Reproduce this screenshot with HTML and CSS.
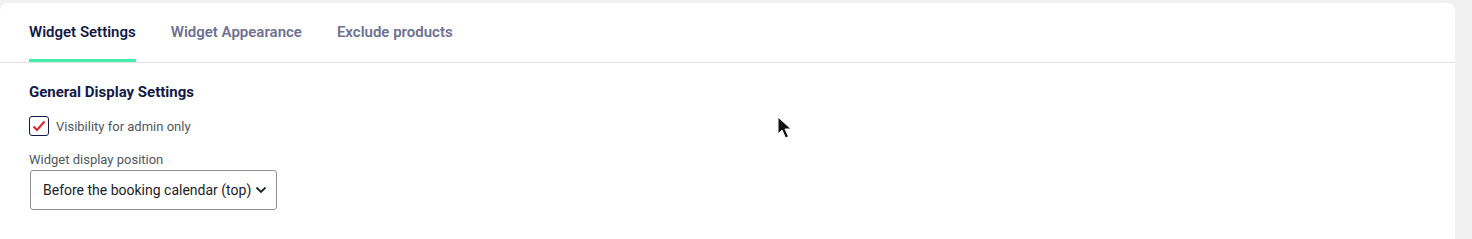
FILE: index.html
```html
<!DOCTYPE html>
<html lang="en">
<head>
    <meta charset="UTF-8">
    <title>Widget Settings</title>
    <link rel="stylesheet" href="styles.css">
</head>
<body>
    <div class="settings-card">
        <nav class="tabs">
            <a class="tab active" href="#">Widget Settings</a>
            <a class="tab" href="#">Widget Appearance</a>
            <a class="tab" href="#">Exclude products</a>
        </nav>

        <div class="tab-content">
            <h2 class="section-title">General Display Settings</h2>

            <label class="check-row">
                <span class="check-box">
                    <svg width="14" height="12" viewBox="0 0 14 12"><path d="M1.5 6.5 L5 10 L12.5 1.5" fill="none" stroke="#e0202f" stroke-width="2"/></svg>
                </span>
                Visibility for admin only
            </label>

            <div class="field">
                <div class="field-label">Widget display position</div>
                <div class="select-box">
                    <span>Before the booking calendar (top)</span>
                    <svg width="12" height="8" viewBox="0 0 12 8"><path d="M1.5 1.5 L6 6 L10.5 1.5" fill="none" stroke="#1d2327" stroke-width="1.8"/></svg>
                </div>
            </div>
        </div>

        <svg class="cursor" width="18" height="26" viewBox="0 0 18 26"><path d="M1 1 L1 18 L5 14 L8.5 22 L11.5 20.5 L8 13 L14 13 Z" fill="#111" stroke="#fff" stroke-width="1"/></svg>
    </div>
</body>
</html>
```

FILE: styles.css
```css
* {
    margin: 0;
    padding: 0;
    box-sizing: border-box;
    font-family: Roboto, 'Liberation Sans', sans-serif;
}

body {
    background: #f0f0f1;
    height: 239px;
    overflow: hidden;
}

.settings-card {
    position: relative;
    background: #fff;
    width: 1455px;
    margin-top: 3px;
    height: 236px;
    border-radius: 8px 8px 0 0;
}

.tabs {
    display: flex;
    gap: 35px;
    padding-left: 29px;
    height: 60px;
    border-bottom: 1px solid #e2e2e2;
}

.tab {
    display: flex;
    align-items: center;
    height: 59px;
    padding-top: 2px;
    font-size: 15px;
    font-weight: 600;
    color: #6e7191;
    text-decoration: none;
    border-bottom: 3px solid transparent;
}

.tab.active {
    color: #141a46;
    border-bottom-color: #45eeaa;
}

.tab-content {
    padding: 20px 29px 0;
}

.section-title {
    font-size: 15px;
    font-weight: 700;
    color: #141a46;
    line-height: 18px;
    margin-bottom: 15px;
}

.check-row {
    display: flex;
    align-items: center;
    gap: 7px;
    font-size: 13px;
    color: #50575e;
}

.check-box {
    width: 20px;
    height: 20px;
    border: 1.5px solid #141a46;
    border-radius: 3px;
    display: flex;
    align-items: center;
    justify-content: center;
}

.field {
    margin-top: 16px;
    margin-left: 1px;
}

.field-label {
    font-size: 13px;
    color: #50575e;
    line-height: 15px;
    margin-left: -1px;
    margin-bottom: 3px;
}

.select-box {
    width: 247px;
    height: 40px;
    border: 1px solid #8c8f94;
    border-radius: 3px;
    display: flex;
    align-items: center;
    gap: 4px;
    padding-left: 12px;
    font-size: 14px;
    color: #1d2327;
}

.cursor {
    position: absolute;
    left: 777px;
    top: 113px;
}
```
